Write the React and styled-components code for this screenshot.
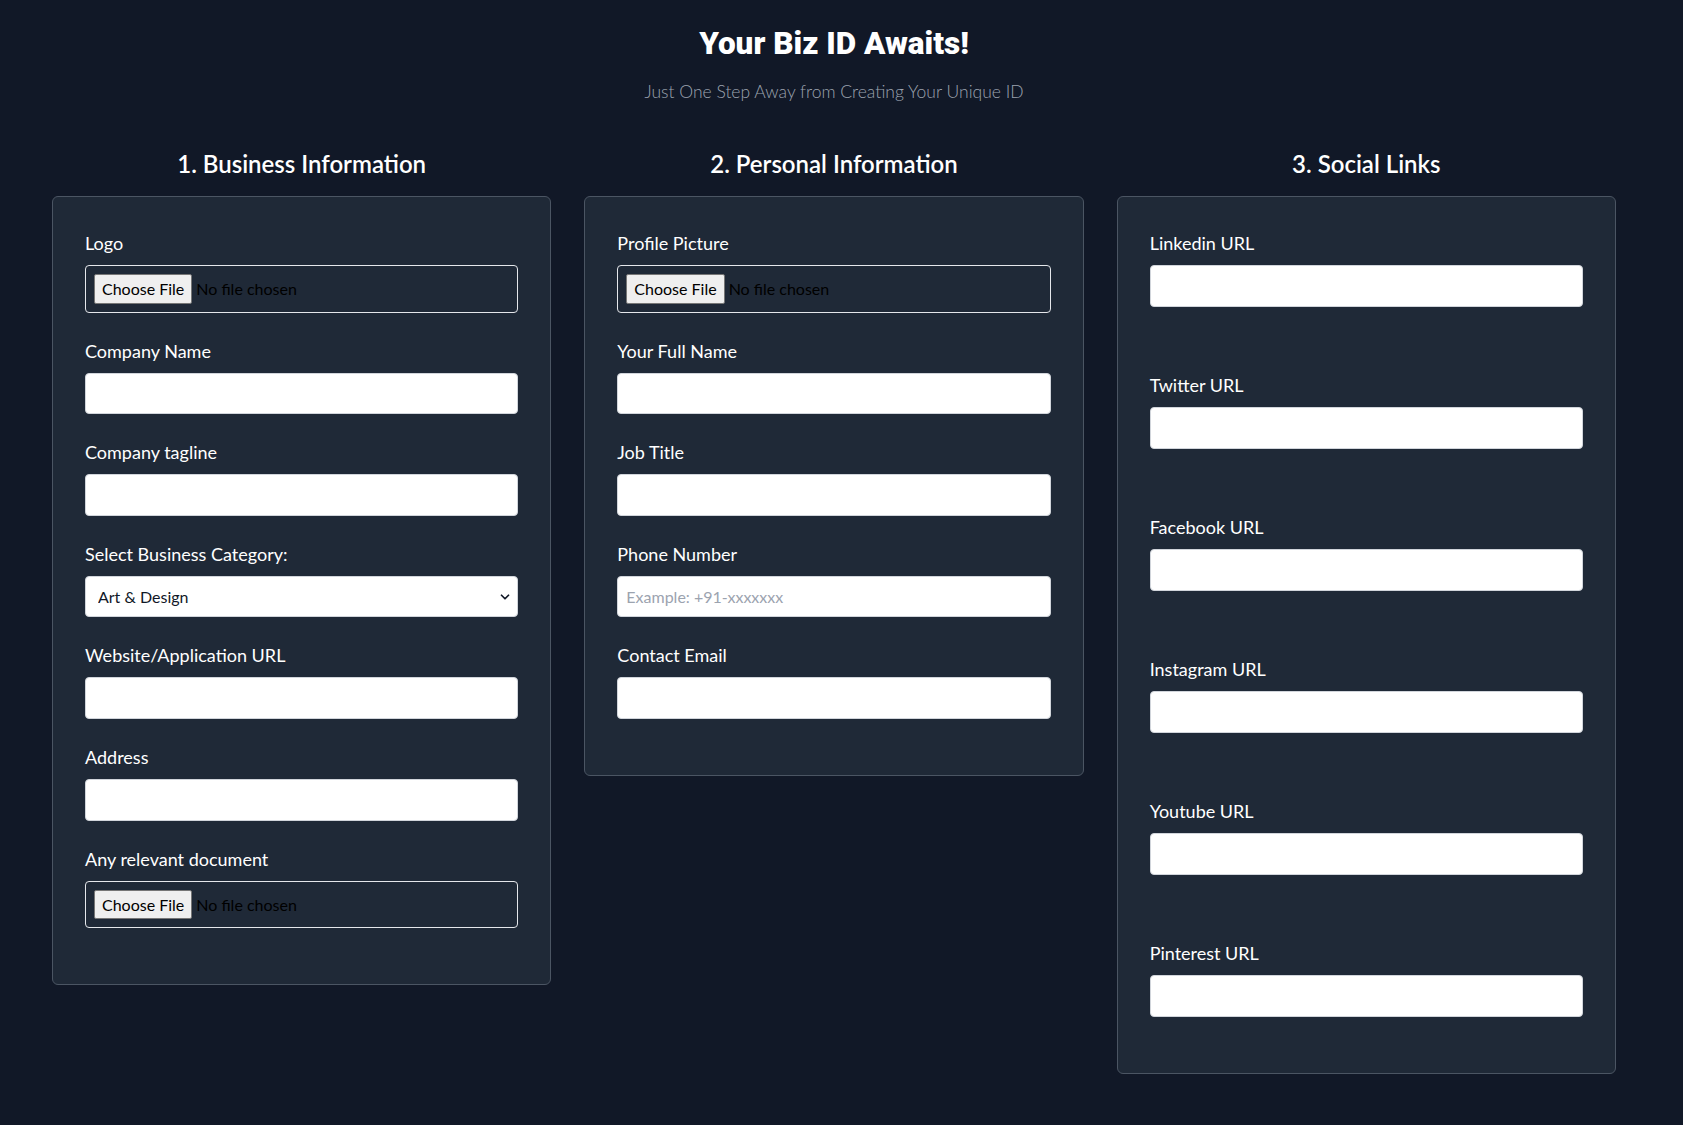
import React from 'react';
import styled, { createGlobalStyle } from 'styled-components';
import { ChevronDown } from 'lucide-react';

const GlobalStyle = createGlobalStyle`
  html, body {
    margin: 0;
    padding: 0;
    background: #111827;
  }
  body {
    font-family: Lato, "Open Sans", sans-serif;
    color: #fff;
  }
  * { box-sizing: border-box; }
`;

const Page = styled.div`
  min-height: 1125px;
  background: #111827;
  padding: 26px 67px 40px 52px;
`;

const Header = styled.header`
  text-align: center;
`;

const Title = styled.h1`
  margin: 0;
  font-family: Roboto, Lato, sans-serif;
  font-weight: 900;
  font-size: 31.5px;
  line-height: 36px;
  color: #fff;
`;

const Subtitle = styled.p`
  margin: 16px 0 0;
  font-weight: 300;
  font-size: 17.5px;
  line-height: 28px;
  color: #9ca3af;
`;

const Columns = styled.div`
  display: grid;
  grid-template-columns: repeat(3, 1fr);
  gap: 33px;
  align-items: start;
  margin-top: 42px;
`;

const Column = styled.section`
  display: flex;
  flex-direction: column;
`;

const Heading = styled.h2`
  margin: 0 0 16px;
  text-align: center;
  font-size: 24px;
  line-height: 32px;
  font-weight: 600;
  color: #fff;
`;

const Card = styled.div`
  display: flex;
  flex-direction: column;
  background: #1f2937;
  border: 1px solid #4b5563;
  border-radius: 6px;
  padding: 32px;
`;

const Field = styled.div`
  margin-bottom: 24px;
  margin-top: ${p => (p.$spaced ? '40.4px' : '0')};
`;

const Label = styled.label`
  display: block;
  margin-bottom: 8px;
  font-size: 18px;
  line-height: 28px;
  color: #fff;
`;

const TextInput = styled.input`
  display: block;
  width: 100%;
  height: 41.6px;
  padding: 8px;
  border: 1px solid #d1d5db;
  border-radius: 4px;
  background: #fff;
  font-family: Lato, sans-serif;
  font-size: 16px;
  color: #111827;
  outline: none;
  &::placeholder {
    color: #9ca3af;
  }
`;

const FileInput = styled.input`
  display: block;
  width: 100%;
  height: 47.6px;
  padding: 8px;
  border: 1px solid #e5e7eb;
  border-radius: 4px;
  background: transparent;
  font-family: Lato, sans-serif;
  font-size: 16px;
  color: #000;
  &::file-selector-button {
    font-family: Lato, sans-serif;
    font-size: 16px;
    height: 29.6px;
    padding: 1px 7px;
    margin-right: 4px;
    background: #efefef;
    color: #000;
    border: 1px solid #767676;
    border-radius: 2px;
  }
`;

const SelectWrap = styled.div`
  position: relative;
`;

const Select = styled.select`
  display: block;
  width: 100%;
  height: 41.6px;
  padding: 0 12px;
  border: 1px solid #d1d5db;
  border-radius: 4px;
  background: #fff;
  font-family: Lato, sans-serif;
  font-size: 16px;
  color: #111827;
  appearance: none;
  outline: none;
`;

const Arrow = styled.span`
  position: absolute;
  right: 6px;
  top: 50%;
  transform: translateY(-50%);
  display: flex;
  color: #111827;
  pointer-events: none;
`;

const business = [
  { label: 'Company Name' },
  { label: 'Company tagline' },
];

const categories = ['Art & Design', 'Technology', 'Finance', 'Health', 'Education', 'Retail'];

function TextField({ label, placeholder, spaced }) {
  return (
    <Field $spaced={spaced}>
      <Label>{label}</Label>
      <TextInput type="text" placeholder={placeholder} />
    </Field>
  );
}

function FileField({ label }) {
  return (
    <Field>
      <Label>{label}</Label>
      <FileInput type="file" />
    </Field>
  );
}

export default function App() {
  const socials = ['Linkedin URL', 'Twitter URL', 'Facebook URL', 'Instagram URL', 'Youtube URL', 'Pinterest URL'];
  return (
    <>
      <GlobalStyle />
      <Page>
        <Header>
          <Title>Your Biz ID Awaits!</Title>
          <Subtitle>Just One Step Away from Creating Your Unique ID</Subtitle>
        </Header>
        <Columns>
          <Column>
            <Heading>1. Business Information</Heading>
            <Card>
              <FileField label="Logo" />
              {business.map(b => (
                <TextField key={b.label} label={b.label} />
              ))}
              <Field>
                <Label>Select Business Category:</Label>
                <SelectWrap>
                  <Select defaultValue="Art & Design">
                    {categories.map(c => (
                      <option key={c}>{c}</option>
                    ))}
                  </Select>
                  <Arrow><ChevronDown size={14} strokeWidth={3} /></Arrow>
                </SelectWrap>
              </Field>
              <TextField label="Website/Application URL" />
              <TextField label="Address" />
              <FileField label="Any relevant document" />
            </Card>
          </Column>
          <Column>
            <Heading>2. Personal Information</Heading>
            <Card>
              <FileField label="Profile Picture" />
              <TextField label="Your Full Name" />
              <TextField label="Job Title" />
              <TextField label="Phone Number" placeholder="Example: +91-xxxxxxx" />
              <TextField label="Contact Email" />
            </Card>
          </Column>
          <Column>
            <Heading>3. Social Links</Heading>
            <Card>
              {socials.map((s, i) => (
                <TextField key={s} label={s} spaced={i > 0} />
              ))}
            </Card>
          </Column>
        </Columns>
      </Page>
    </>
  );
}
